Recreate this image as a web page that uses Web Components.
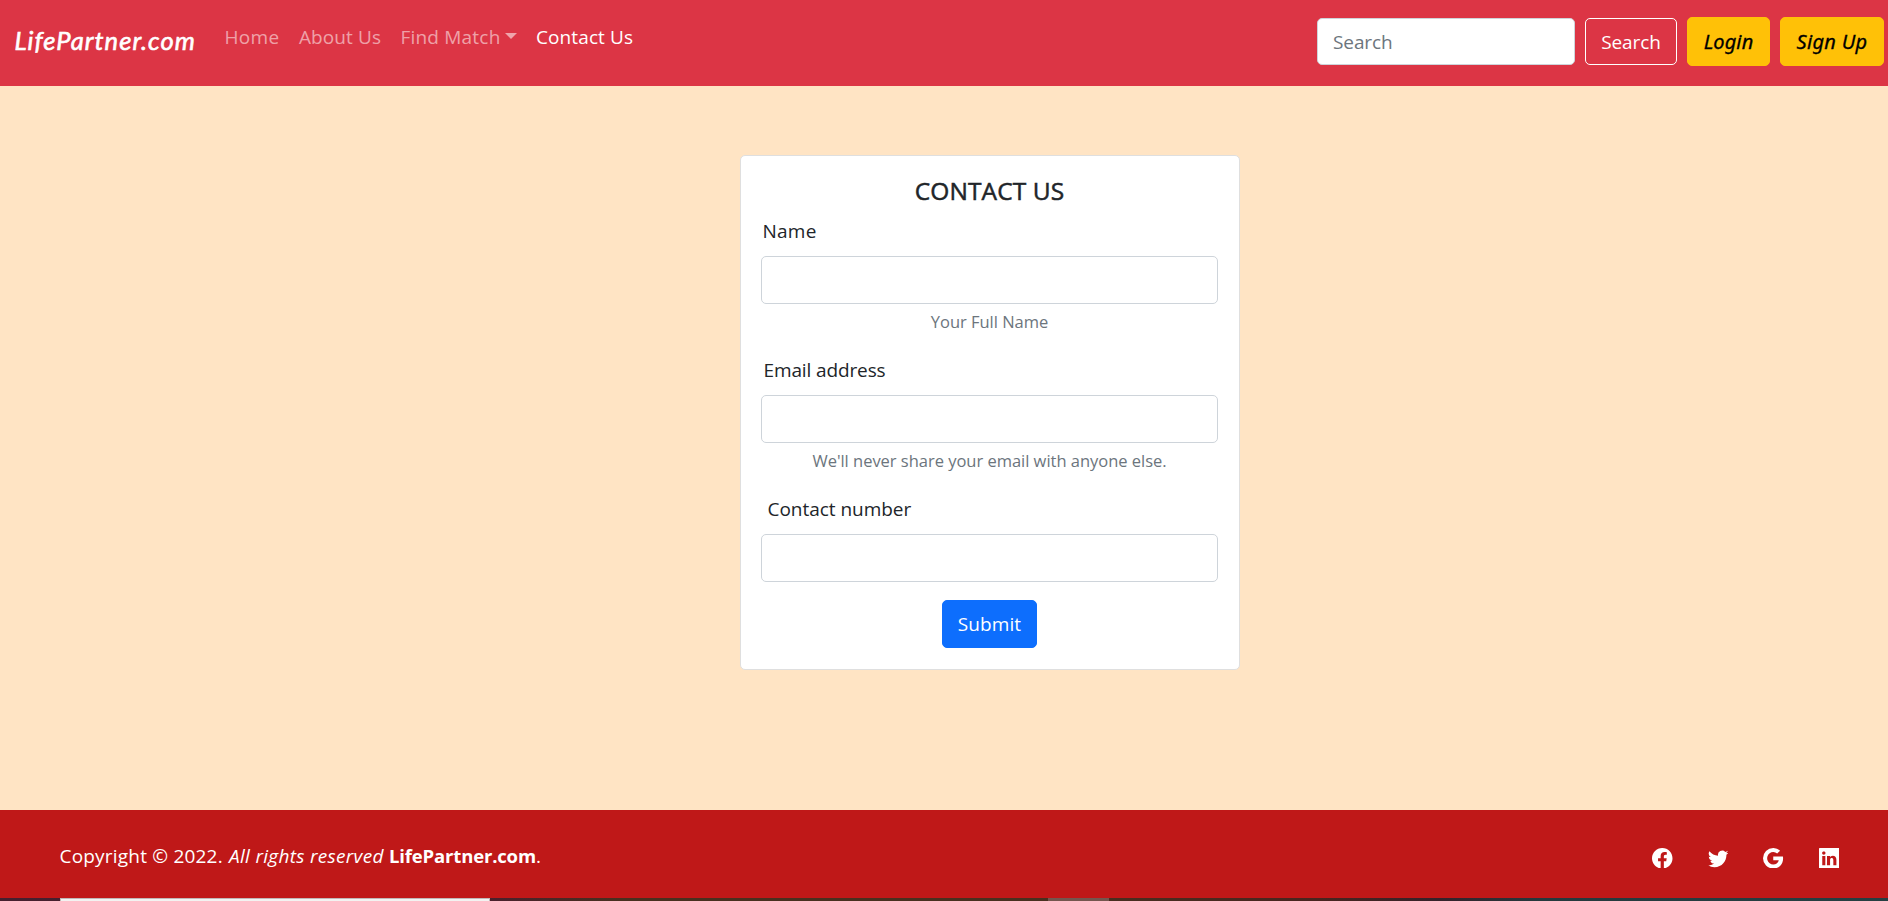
<!DOCTYPE html>
<html lang="en">
<head>
<meta charset="utf-8">
<title>LifePartner.com - Contact Us</title>
<style>
html,body{margin:0;height:100%}
body{font-family:"Open Sans","Noto Sans",sans-serif;font-size:19px;line-height:30px;color:#212529;background:#ffe4c4;overflow:hidden}
</style>
</head>
<body>
<life-page></life-page>
<script>
const define = (name, css, html) => customElements.define(name, class extends HTMLElement {
  connectedCallback() {
    if (this.shadowRoot) return;
    const root = this.attachShadow({ mode: 'open' });
    const t = document.createElement('template');
    t.innerHTML = `<style>*{box-sizing:border-box}${css}</style>${typeof html === 'function' ? html(this) : html}`;
    root.append(t.content.cloneNode(true));
  }
});

define('nav-link', `
:host{display:block;color:rgba(255,255,255,.55);white-space:nowrap}
:host([active]){color:#fff}
a{display:flex;align-items:center;color:inherit}
i{border:6px solid transparent;border-top-color:currentColor;border-bottom:0;margin:-3px 0 0 4px}`,
  el => `<a><slot></slot>${el.hasAttribute('dropdown') ? '<i></i>' : ''}</a>`);

define('nav-button', `
:host{display:block}
button{display:block;width:100%;height:100%;padding:0;border-radius:5px;font:inherit;letter-spacing:inherit;white-space:nowrap;text-align:center;color:#fff;background:none;border:1px solid #fff}
:host([warning]) button{font:italic 400 20px/30px "Noto Sans",sans-serif;-webkit-text-stroke:.3px #000;color:#000;background:#ffc107;border-color:#ffc107}
:host([primary]) button{background:#0d6efd;border-color:#0d6efd}`,
  `<button><slot></slot></button>`);

define('site-header', `
:host{display:flex;height:86px;background:#dc3545;align-items:flex-start;padding:0 4px 0 14.5px}
.brand{font:italic 400 25.5px/30px Lato,sans-serif;-webkit-text-stroke:.6px #fff;letter-spacing:1.05px;color:#fff;margin-top:25px;width:210px;white-space:nowrap}
nav{display:flex;margin-top:22px;flex:1}
nav nav-link:nth-child(1){width:74.5px;letter-spacing:.3px}
nav nav-link:nth-child(2){width:101.5px;letter-spacing:.1px}
nav nav-link:nth-child(3){width:135.5px;letter-spacing:.2px}
nav nav-link:nth-child(4){letter-spacing:.1px}
form{display:flex;align-items:center;margin-top:17px;height:49px}
input{width:258px;height:47px;border:1px solid #ced4da;border-radius:5px;padding:0 15px;font:inherit;letter-spacing:-.1px;margin-right:10px;background:#fff}
input::placeholder{color:#6c757d;opacity:1}
.s{width:92px;height:47px;margin-right:10px;letter-spacing:-.1px}
.l{width:83px;height:49px;margin-right:10px;letter-spacing:.1px}
.u{width:104px;height:49px;letter-spacing:.3px}`, `
<div class="brand">LifePartner.com</div>
<nav><nav-link>Home</nav-link><nav-link>About Us</nav-link><nav-link dropdown>Find Match</nav-link><nav-link active>Contact Us</nav-link></nav>
<form><input placeholder="Search"><nav-button class="s">Search</nav-button><nav-button class="l" warning>Login</nav-button><nav-button class="u" warning>Sign Up</nav-button></form>`);

define('form-field', `
:host{display:block;height:139px}
label{display:block;padding-left:var(--indent,2.5px);margin-bottom:9.5px}
input{display:block;width:100%;height:48px;border:1px solid #ced4da;border-radius:5px;background:#fff}
small{display:block;text-align:center;font-size:16.5px;line-height:26px;color:#6c757d;margin-top:5px;letter-spacing:-.02px}`,
  el => `<label><slot></slot></label><input>${el.getAttribute('help') ? `<small>${el.getAttribute('help')}</small>` : ''}`);

define('contact-card', `
:host{display:block;width:500px;height:515px;background:#fff;border:1px solid #dfdfdf;border-radius:5px;padding:20px 21px 0 20px}
h5{margin:0 0 10px;font-size:24.5px;line-height:30px;font-weight:400;-webkit-text-stroke:.5px #212529;text-align:center;letter-spacing:.1px}
.name{letter-spacing:.25px;--indent:1.5px}
.mail{letter-spacing:-.12px}
.phone{--indent:6.5px;height:106px;letter-spacing:-.03px}
nav-button{width:95px;height:48px;margin:0 auto;letter-spacing:.1px}`, `
<h5>CONTACT US</h5>
<form-field class="name" help="Your Full Name">Name</form-field>
<form-field class="mail" help="We'll never share your email with anyone else.">Email address</form-field>
<form-field class="phone">Contact number</form-field>
<nav-button primary>Submit</nav-button>`);

const icons = {
  facebook: 'M16 8.049c0-4.446-3.582-8.05-8-8.05C3.58 0-.002 3.603-.002 8.05c0 4.017 2.926 7.347 6.75 7.951v-5.625h-2.03V8.05H6.75V6.275c0-2.017 1.195-3.131 3.022-3.131.876 0 1.791.157 1.791.157v1.98h-1.009c-.993 0-1.303.621-1.303 1.258v1.51h2.218l-.354 2.326H9.25V16c3.824-.604 6.75-3.934 6.75-7.951z',
  twitter: 'M5.026 15c6.038 0 9.341-5.003 9.341-9.334 0-.14 0-.282-.006-.422A6.685 6.685 0 0 0 16 3.542a6.658 6.658 0 0 1-1.889.518 3.301 3.301 0 0 0 1.447-1.817 6.533 6.533 0 0 1-2.087.793A3.286 3.286 0 0 0 7.875 6.03a9.325 9.325 0 0 1-6.767-3.429 3.289 3.289 0 0 0 1.018 4.382A3.323 3.323 0 0 1 .64 6.575v.045a3.288 3.288 0 0 0 2.632 3.218 3.203 3.203 0 0 1-.865.115 3.23 3.23 0 0 1-.614-.057 3.283 3.283 0 0 0 3.067 2.277A6.588 6.588 0 0 1 .78 13.58a6.32 6.32 0 0 1-.78-.045A9.344 9.344 0 0 0 5.026 15z',
  google: 'M15.545 6.558a9.42 9.42 0 0 1 .139 1.626c0 2.434-.87 4.492-2.384 5.885h.002C11.978 15.292 10.158 16 8 16A8 8 0 1 1 8 0a7.689 7.689 0 0 1 5.352 2.082l-2.284 2.284A4.347 4.347 0 0 0 8 3.166c-2.087 0-3.86 1.408-4.492 3.304a4.792 4.792 0 0 0 0 3.063h.003c.635 1.893 2.405 3.301 4.492 3.301 1.078 0 2.004-.276 2.722-.764h-.003a3.702 3.702 0 0 0 1.599-2.431H8v-3.08h7.545z',
  linkedin: 'M0 .5C0 .2.2 0 .5 0h15c.3 0 .5.2.5.5v15c0 .3-.2.5-.5.5H.5a.5.5 0 0 1-.5-.5V.5zm4.943 12.894V6.169H2.542v7.225h2.401zm-1.2-8.212c.837 0 1.358-.554 1.358-1.248-.015-.709-.52-1.248-1.342-1.248-.822 0-1.359.54-1.359 1.248 0 .694.521 1.248 1.327 1.248h.016zm4.908 8.212V9.359c0-.216.016-.432.08-.586.173-.431.568-.878 1.232-.878.869 0 1.216.662 1.216 1.634v3.865h2.401V9.25c0-2.22-1.184-3.252-2.764-3.252-1.274 0-1.845.7-2.165 1.193v.025h-.016a5.54 5.54 0 0 1 .016-.025V6.169h-2.4c.03.678 0 7.225 0 7.225h2.4z'
};
define('social-icon', `
:host{display:block;width:20.5px;height:20.5px;color:#fff}
svg{display:block;width:100%;height:100%}`,
  el => `<svg viewBox="0 0 16 16" fill="currentColor"><path d="${icons[el.getAttribute('name')]}"/></svg>`);

define('site-footer', `
:host{display:flex;height:88px;background:#bf1818;color:#fff;justify-content:space-between;padding:0 49px 0 59.5px}
p{margin:30.5px 0 0;white-space:nowrap;display:flex}
.c{letter-spacing:.2px;width:169.5px}
em{letter-spacing:.3px;width:160px}
b{font-size:18.5px;letter-spacing:-.16px}
.icons{display:flex;gap:35px;padding-top:37.5px}`, `
<p><span class="c">Copyright © 2022.</span><em>All rights reserved</em><b>LifePartner.com</b><span>.</span></p>
<div class="icons"><social-icon name="facebook"></social-icon><social-icon name="twitter"></social-icon><social-icon name="google"></social-icon><social-icon name="linkedin"></social-icon></div>`);

define('task-strip', `
:host{display:flex;height:3px;background:linear-gradient(90deg,#45202f 0,#4a202c 490px,#48301f 620px,#48301f 1050px,#48251f 1320px,#35222a 1440px,#25393d 1540px,#253f42 100%)}
.a{width:430px;margin:0 558px 0 60px;background:#f3f2f1;border:1px solid #c0b8b8;border-bottom:0}
.b{width:61px;background:#74564e}`, `<div class="a"></div><div class="b"></div>`);

define('life-page', `
:host{display:flex;flex-direction:column;height:901px}
main{flex:1;padding:69px 0 0 740px;background:#ffe4c4}`, `
<site-header></site-header><main><contact-card></contact-card></main><site-footer></site-footer><task-strip></task-strip>`);
</script>
</body>
</html>
